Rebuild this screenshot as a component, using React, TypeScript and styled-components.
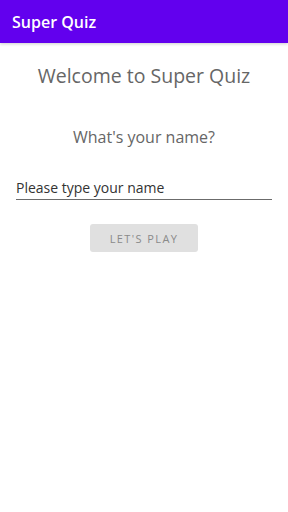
import React from 'react';
import styled, {createGlobalStyle} from "styled-components";

const GlobalStyle = createGlobalStyle`
  html, body {
    margin: 0;
    padding: 0;
    background: #FFFFFF;
    font-family: 'Open Sans', 'Noto Sans', sans-serif;
  }
`

export default function App() {
    return (
        <Screen>
            <GlobalStyle/>
            <AppBar>
                <AppTitle>Super Quiz</AppTitle>
            </AppBar>
            <Content>
                <Welcome>Welcome to Super Quiz</Welcome>
                <Question>What's your name?</Question>
                <NameField>
                    <NameInput placeholder={"Please type your name"}/>
                </NameField>
                <PlayButton disabled>LET'S PLAY</PlayButton>
            </Content>
        </Screen>
    );
}

const Screen = styled.div`
  width: 288px;
  min-height: 512px;
  background: #FFFFFF;
  display: flex;
  flex-direction: column;
`

const AppBar = styled.div`
  height: 43px;
  background: #6200EE;
  display: flex;
  align-items: center;
  padding: 0 12px;
  box-shadow: 0 1px 3px rgba(0, 0, 0, 0.2);
`

const AppTitle = styled.h1`
  margin: 0;
  font-size: 16px;
  font-weight: 600;
  color: #FFFFFF;
`

const Content = styled.div`
  display: flex;
  flex-direction: column;
  align-items: center;
  padding: 20px 16px 0 16px;
`

const Welcome = styled.div`
  font-size: 19.5px;
  font-weight: 400;
  color: #666666;
  line-height: 26px;
`

const Question = styled.div`
  margin-top: 37px;
  font-size: 16px;
  color: #666666;
  line-height: 22px;
`

const NameField = styled.div`
  align-self: stretch;
  margin-top: 28px;
  border-bottom: 1px solid #6b6b6b;
`

const NameInput = styled.input`
  width: 100%;
  box-sizing: border-box;
  border: none;
  outline: none;
  padding: 0 0 1px 0;
  font-family: 'Open Sans', 'Noto Sans', sans-serif;
  font-size: 14px;
  line-height: 20px;
  background: transparent;

  &::placeholder {
    color: #333333;
  }
`

const PlayButton = styled.button`
  margin-top: 24px;
  width: 108px;
  height: 28px;
  border: none;
  border-radius: 3px;
  background: #E0E0E0;
  color: #8a8a8a;
  font-family: 'Open Sans', 'Noto Sans', sans-serif;
  font-size: 11px;
  font-weight: 400;
  letter-spacing: 1.4px;
`
